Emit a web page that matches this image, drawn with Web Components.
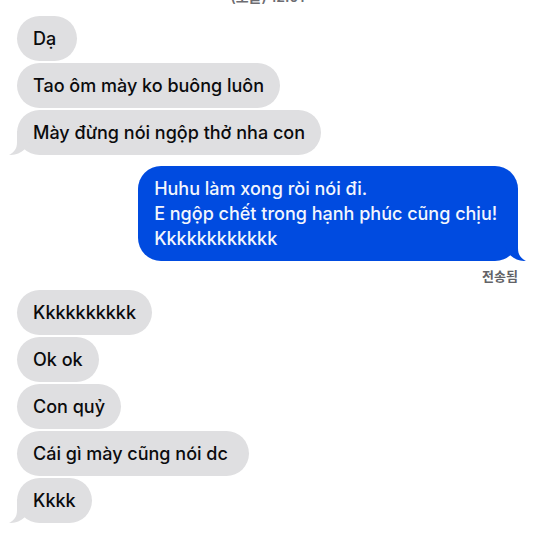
<!DOCTYPE html>
<html lang="vi">
<head>
<meta charset="utf-8">
<meta name="viewport" content="width=device-width, initial-scale=1">
<title>Messages</title>
<style>
  body { margin:0; background:#fff; color:#0b0b0d; font-family:Inter,"Noto Sans CJK KR",sans-serif; overflow:hidden; }
</style>
</head>
<body>
<chat-thread>
  <chat-stamp lang="ko">(오늘) 12:01</chat-stamp>
  <chat-group>
    <chat-bubble>Dạ </chat-bubble>
    <chat-bubble>Tao ôm mày ko buông luôn</chat-bubble>
    <chat-bubble tail>Mày đừng nói ngộp thở nha con</chat-bubble>
  </chat-group>
  <chat-group side="sent">
    <chat-bubble side="sent" tail>Huhu làm xong ròi nói đi.
E ngộp chết trong hạnh phúc cũng chịu! 
Kkkkkkkkkkkk</chat-bubble>
    <span slot="status" lang="ko">전송됨</span>
  </chat-group>
  <chat-group>
    <chat-bubble>Kkkkkkkkkk</chat-bubble>
    <chat-bubble>Ok ok</chat-bubble>
    <chat-bubble>Con quỷ</chat-bubble>
    <chat-bubble>Cái gì mày cũng nói dc </chat-bubble>
    <chat-bubble tail>Kkkk</chat-bubble>
  </chat-group>
</chat-thread>

<script>
(function(){
  function define(name, html){
    customElements.define(name, class extends HTMLElement{
      connectedCallback(){
        if(this.shadowRoot) return;
        this.attachShadow({mode:'open'}).innerHTML = html;
      }
    });
  }

  define('chat-thread', `
  <style>
    :host{ display:block; }
    main{ display:flex; flex-direction:column; gap:11px; padding:0 18px 18px 17px; }
  </style>
  <main><slot></slot></main>`);

  /* date line, scrolled almost out of the top edge */
  define('chat-stamp', `
  <style>
    :host{ display:block; text-align:center; }
    div{ display:flex; flex-direction:column; justify-content:flex-end; height:5px;
      font-size:14px; line-height:16px; font-weight:600; color:#6d6d72; }
  </style>
  <div><span><slot></slot></span></div>`);

  define('chat-group', `
  <style>
    :host{ display:flex; flex-direction:column; align-items:flex-start; gap:2px; }
    :host([side="sent"]){ align-items:flex-end; }
    ::slotted([slot="status"]){ margin:3px 0 -7px; font-size:13px; line-height:20px; font-weight:600; color:#636367; }
  </style>
  <slot></slot>
  <slot name="status"></slot>`);

  /* one message; the tail attribute adds the hook at the bottom corner */
  define('chat-bubble', `
  <style>
    :host{ --fill:#dfdfe1; position:relative; display:block; box-sizing:border-box; max-width:80%;
      padding:10px 16px; border-radius:23px; background:var(--fill);
      font-size:18px; line-height:25px; font-weight:500; }
    :host([side="sent"]){ --fill:#004be0; color:#f3f6fd; }
    .text{ display:block; white-space:break-spaces; }
    svg{ display:none; position:absolute; left:-8px; bottom:0; width:24px; height:24px; fill:var(--fill); }
    :host([tail]) svg{ display:block; }
    :host([side="sent"]) svg{ left:auto; right:-8px; transform:scaleX(-1); }
  </style>
  <span class="text"><slot></slot></span>
  <svg viewBox="0 0 24 24" aria-hidden="true"><path d="M8 0V11C8 17 6 21 0 23.8C6 24.4 11 22.5 15.5 18.5L21 10V0z"/></svg>`);
})();
</script>
</body>
</html>
